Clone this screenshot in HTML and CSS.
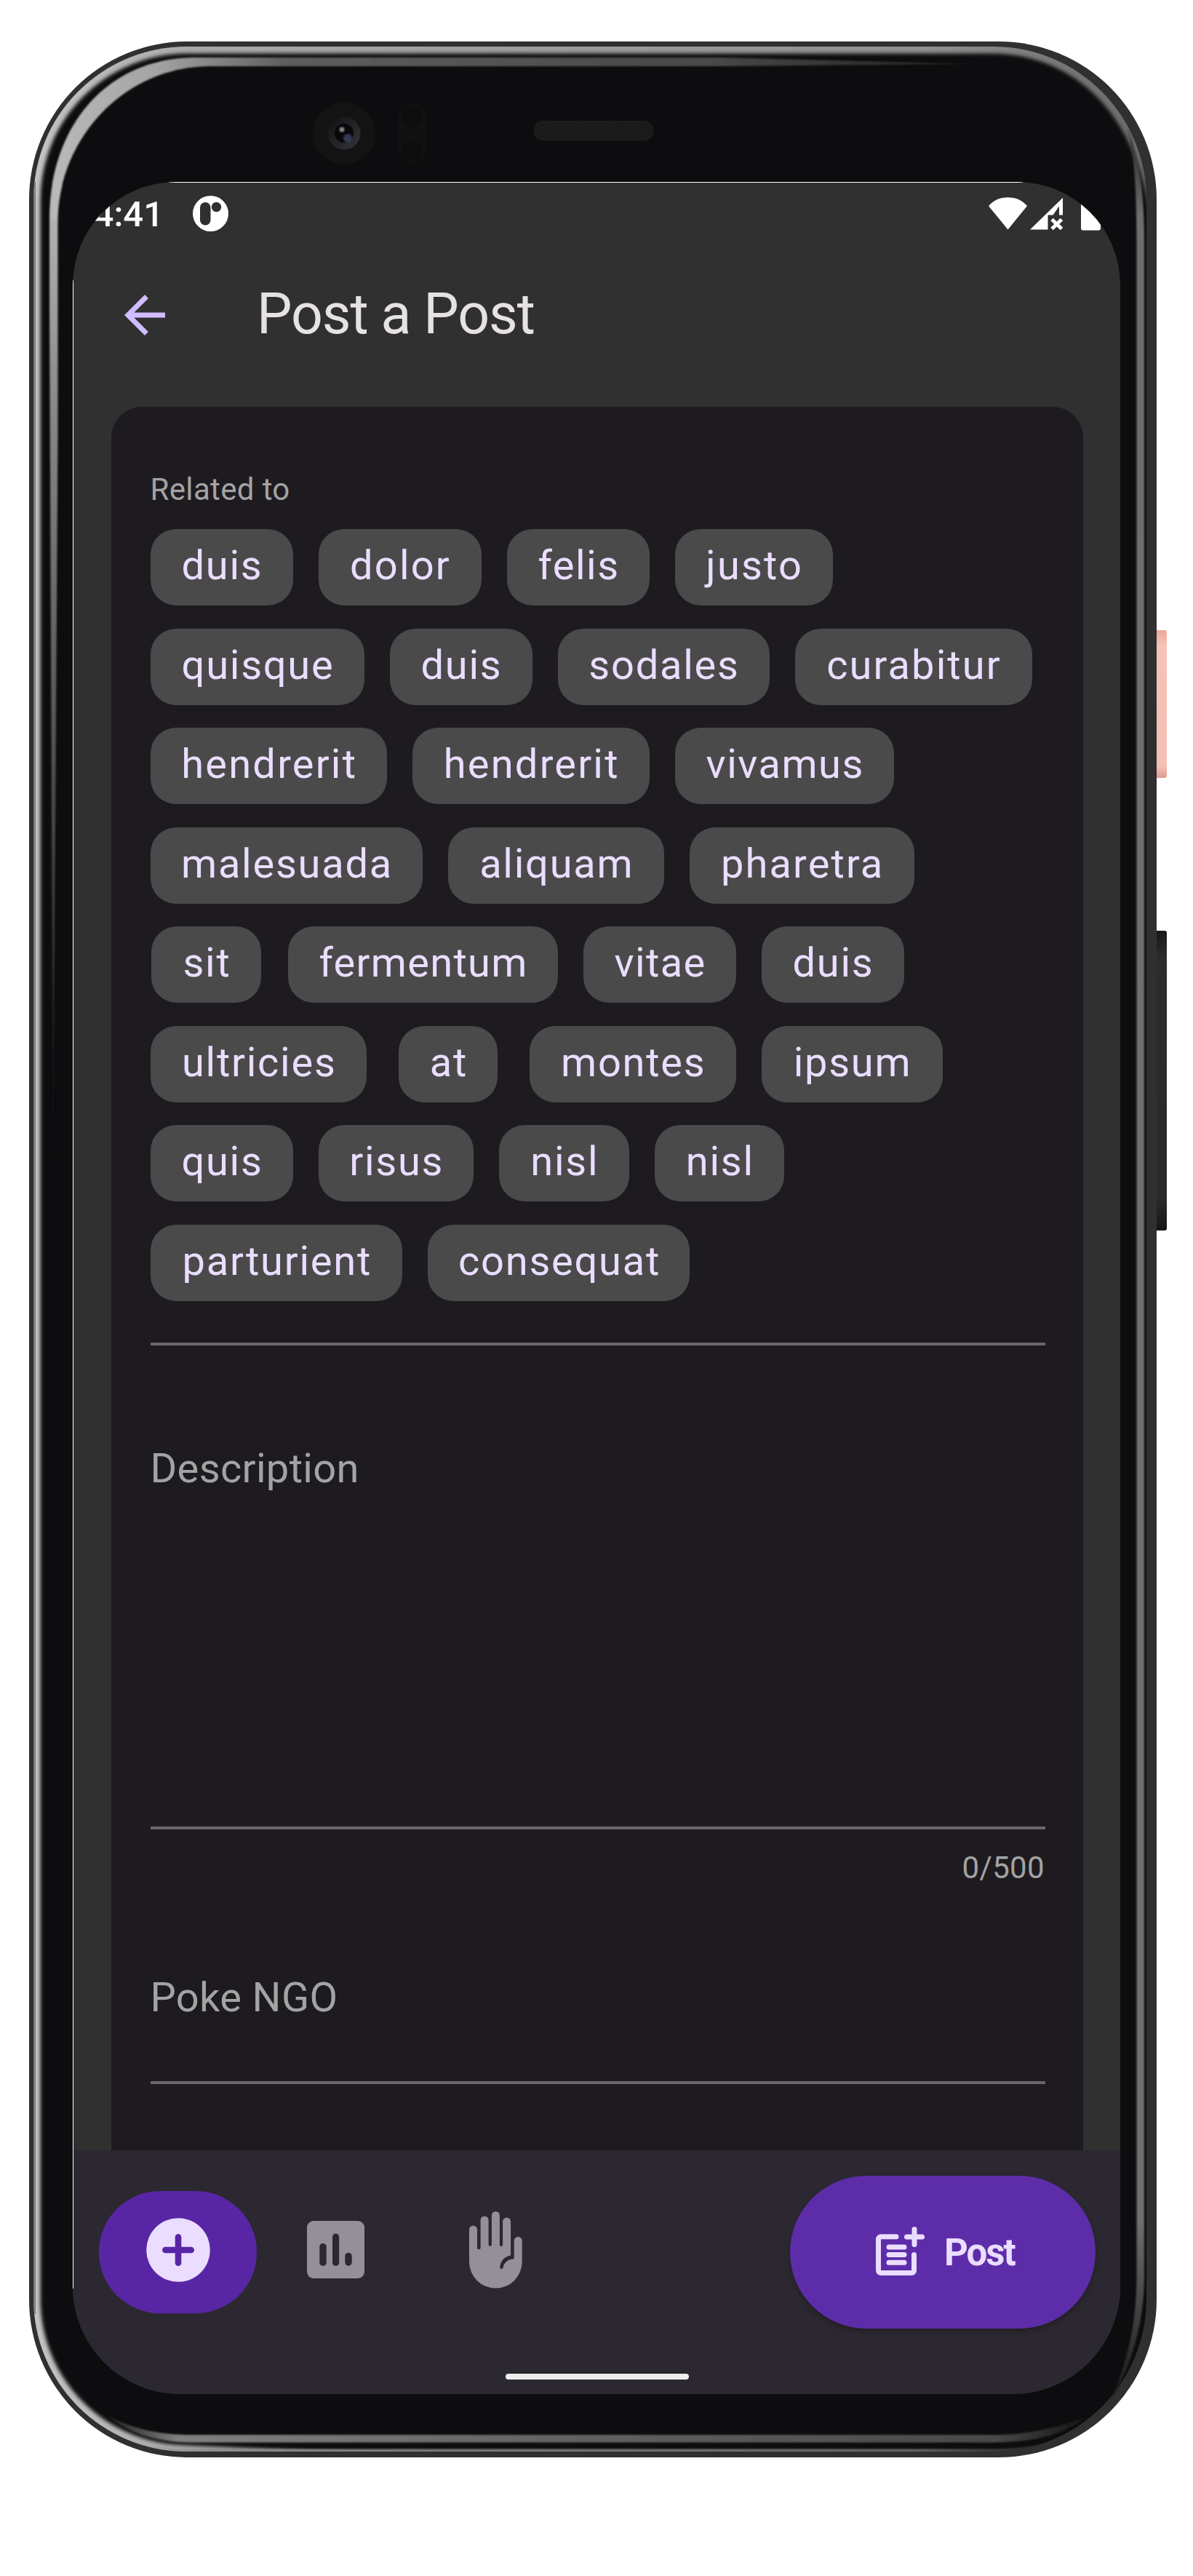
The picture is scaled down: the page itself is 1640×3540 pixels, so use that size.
FILE: index.html
```html
<!DOCTYPE html>
<html lang="en">
<head>
<meta charset="utf-8">
<title>Post a Post</title>
<link rel="stylesheet" href="styles.css">
</head>
<body>
<div class="device">
  <svg class="frame" width="1640" height="3540" viewBox="0 0 1640 3540" aria-hidden="true">
    <defs>
      <linearGradient id="metal" gradientUnits="userSpaceOnUse" x1="40" y1="0" x2="1590" y2="0">
        <stop offset="0" stop-color="#c4c4c4"/><stop offset=".15" stop-color="#a8a8a8"/><stop offset=".8" stop-color="#8f8f8f"/><stop offset="1" stop-color="#666"/>
      </linearGradient>
      <linearGradient id="lowMetal" gradientUnits="userSpaceOnUse" x1="180" y1="0" x2="1520" y2="0">
        <stop offset="0" stop-color="#8a8a8a" stop-opacity="0"/><stop offset=".08" stop-color="#8a8a8a"/><stop offset=".8" stop-color="#6a6a6a"/><stop offset="1" stop-color="#555" stop-opacity="0"/>
      </linearGradient>
      <linearGradient id="sheenTop" gradientUnits="userSpaceOnUse" x1="60" y1="0" x2="1340" y2="0">
        <stop offset="0" stop-color="#bbb"/><stop offset=".12" stop-color="#a4a4a4"/><stop offset=".26" stop-color="#5e5e5e"/><stop offset=".7" stop-color="#4a4a4a"/><stop offset="1" stop-color="#222"/>
      </linearGradient>
      <linearGradient id="sheenLeft" gradientUnits="userSpaceOnUse" x1="0" y1="300" x2="0" y2="1560">
        <stop offset="0" stop-color="#b2b2b2"/><stop offset=".2" stop-color="#8a8a8a"/><stop offset=".8" stop-color="#333"/><stop offset="1" stop-color="#0d0d0f"/>
      </linearGradient>
      <linearGradient id="sheenBottom" gradientUnits="userSpaceOnUse" x1="150" y1="0" x2="1500" y2="0">
        <stop offset="0" stop-color="#222"/><stop offset=".07" stop-color="#808080"/><stop offset=".5" stop-color="#606060"/><stop offset=".9" stop-color="#4a4a4a"/><stop offset="1" stop-color="#111"/>
      </linearGradient>
      <linearGradient id="sheenRight" gradientUnits="userSpaceOnUse" x1="0" y1="170" x2="0" y2="3300">
        <stop offset="0" stop-color="#222"/><stop offset=".04" stop-color="#6e6e6e"/><stop offset=".92" stop-color="#707072"/><stop offset="1" stop-color="#161616"/>
      </linearGradient>
      <linearGradient id="pink" x1="0" y1="0" x2="0" y2="1">
        <stop offset="0" stop-color="#eaa79a"/><stop offset=".1" stop-color="#f5c2b7"/><stop offset=".92" stop-color="#f5c0b5"/><stop offset="1" stop-color="#dc9a8e"/>
      </linearGradient>
      <linearGradient id="dark" x1="0" y1="0" x2="0" y2="1">
        <stop offset="0" stop-color="#171717"/><stop offset=".09" stop-color="#2c2c2c"/><stop offset=".9" stop-color="#292929"/><stop offset="1" stop-color="#161616"/>
      </linearGradient>
      <linearGradient id="lensRing" x1="0" y1="0" x2="1" y2="1">
        <stop offset="0" stop-color="#101011"/><stop offset="1" stop-color="#35363a"/>
      </linearGradient>
      <pattern id="mesh" width="4" height="4" patternUnits="userSpaceOnUse">
        <rect width="4" height="4" fill="#101010"/><rect width="2" height="2" fill="#252525"/><rect x="2" y="2" width="2" height="2" fill="#252525"/>
      </pattern>
      <clipPath id="body"><rect x="46" y="64" width="1530" height="3305" rx="210"/></clipPath>
      <filter id="soft" x="-5%" y="-5%" width="110%" height="110%"><feGaussianBlur stdDeviation="2.4"/></filter>
      <filter id="fine" x="-5%" y="-5%" width="110%" height="110%"><feGaussianBlur stdDeviation=".9"/></filter>
    </defs>
    <rect x="1584" y="866" width="20" height="203" rx="3" fill="url(#pink)"/>
    <rect x="1584" y="1279" width="20" height="412" rx="3" fill="url(#dark)"/>
    <rect x="40" y="57" width="1550" height="3320" rx="217" fill="#2f302f"/>
    <rect x="46" y="64" width="1530" height="3305" rx="210" fill="#0d0d0f"/>
    <g clip-path="url(#body)" fill="none">
      <path d="M1592 330C1580 158 1485 66 1362 66H258C141 66 48 160 48 276V3158C48 3275 141 3367 258 3368L520 3380" stroke="url(#metal)" stroke-width="15" filter="url(#soft)"/>
      <path d="M180 3355Q220 3368 258 3368H1366Q1450 3368 1520 3330" stroke="url(#lowMetal)" stroke-width="5" filter="url(#fine)"/>
      <path d="M47.500 250V3180" stroke="#7e7e7e" stroke-width="3"/>
    </g>
    <g filter="url(#fine)">
      <path d="M73 1600L68 420V300H79.500V600Z" fill="url(#sheenLeft)"/>
      <path d="M68 301C68 170 150 79 268 79H990L1340 88L990 91H290C170 91 82 190 79.500 301Z" fill="url(#sheenTop)"/>
      <path d="M1550 175C1562 210 1573 250 1573 330V3130C1573 3190 1555 3255 1526 3300C1548 3250 1562 3200 1562.500 3130V330C1562 260 1560 215 1550 175Z" fill="url(#sheenRight)"/>
      <path d="M145 3318C180 3338 220 3346 262 3346H1366C1410 3346 1450 3338 1496 3320C1460 3350 1410 3356 1366 3356.500H262C210 3356 175 3342 145 3318Z" fill="url(#sheenBottom)"/>
    </g>
    <circle cx="473" cy="183" r="43" fill="#131313"/>
    <circle cx="473" cy="183" r="22.500" fill="url(#lensRing)"/>
    <circle cx="473" cy="183" r="13" fill="#08080a"/>
    <circle cx="478" cy="190" r="6" fill="#343b57" filter="url(#fine)"/>
    <circle cx="470" cy="178" r="3.500" fill="#888" filter="url(#fine)"/>
    <rect x="548" y="143" width="37" height="82" rx="18.500" fill="#111"/>
    <circle cx="566.500" cy="161" r="14" fill="#0e0e0e"/>
    <circle cx="566.500" cy="207" r="14" fill="#0e0e0e"/>
    <rect x="734.500" y="166.500" width="163" height="26" rx="12" fill="url(#mesh)" stroke="#222"/>
  </svg>

  <div class="screen">
    <div class="status">
      <span class="time">4:41</span>
      <svg class="badge" width="49" height="49" viewBox="0 0 49 49"><circle cx="24.500" cy="24.500" r="24.500" fill="#fff"/><rect x="10" y="9" width="14.500" height="31.500" rx="7.200" fill="#303030"/><circle cx="32.500" cy="15.500" r="6.700" fill="#303030"/></svg>
      <svg class="signals" width="154" height="50" viewBox="0 0 154 50" fill="#fff">
        <path d="M0 14C7 6 16 2.300 26.500 2.300S46 6 53 14L26.500 46.500Z"/>
        <path d="M57 46.500L102 2.800V26.500H97V14.500L88.500 26.500H81.500V46.500Z"/>
        <path d="M87 32.500L100.500 45.500M100.500 32.500L87 45.500" stroke="#fff" stroke-width="5"/>
        <path d="M127 6H154V44.500a3 3 0 0 1-3 3H130a3 3 0 0 1-3-3Z"/>
      </svg>
    </div>

    <header class="appbar">
      <svg width="56" height="56" viewBox="4 4 16 16" fill="#d0bcff"><path d="M20 11H7.830l5.590-5.590L12 4l-8 8 8 8 1.410-1.410L7.830 13H20v-2z"/></svg>
      <h1>Post a Post</h1>
    </header>

    <main class="content">
      <section class="card">
        <div class="label small">Related to</div>
        <ul class="chips">
          <li><span style="--w:196px">duis</span></li>
          <li><span style="--w:224px;--t:2.2px">dolor</span></li>
          <li><span style="--w:196px;--t:1.5px">felis</span></li>
          <li><span style="--w:217.500px;--t:2.2px">justo</span></li>
          <li><span style="--w:294px">quisque</span></li>
          <li><span style="--w:196px">duis</span></li>
          <li><span style="--w:291px">sodales</span></li>
          <li><span style="--w:326px;--t:2.1px">curabitur</span></li>
          <li><span style="--w:325.500px;--t:2.2px">hendrerit</span></li>
          <li><span style="--w:325.500px;--t:2.2px">hendrerit</span></li>
          <li><span style="--w:301.500px;--t:1.5px">vivamus</span></li>
          <li><span style="--w:374px">malesuada</span></li>
          <li><span style="--w:297.500px">aliquam</span></li>
          <li><span style="--w:308.500px;--t:2.1px">pharetra</span></li>
          <li><span style="--w:151px">sit</span></li>
          <li><span style="--w:371px;--t:1.3px">fermentum</span></li>
          <li><span style="--w:210px;--t:1.400px">vitae</span></li>
          <li><span style="--w:196px">duis</span></li>
          <li><span style="--w:297.500px">ultricies</span></li>
          <li><span style="--w:136.500px">at</span></li>
          <li><span style="--w:283.500px">montes</span></li>
          <li><span style="--w:249px">ipsum</span></li>
          <li><span style="--w:196px">quis</span></li>
          <li><span style="--w:213.500px">risus</span></li>
          <li><span style="--w:178.500px">nisl</span></li>
          <li><span style="--w:178.500px">nisl</span></li>
          <li><span style="--w:346.500px">parturient</span></li>
          <li><span style="--w:360px">consequat</span></li>
        </ul>
        <div class="field description"><div class="label">Description</div></div>
        <div class="counter label small">0/500</div>
        <div class="field poke"><div class="label">Poke NGO</div></div>
      </section>
    </main>

    <nav class="bottombar">
      <div class="tab active">
        <svg width="88" height="88" viewBox="0 0 88 88"><circle cx="44" cy="44" r="43.800" fill="#eaddff"/><path d="M26.300 44H61.700M44 26.300V61.700" stroke="#5826a5" stroke-width="8.600" stroke-linecap="round"/></svg>
      </div>
      <svg class="chart" width="79" height="79" viewBox="0 0 79 79"><rect width="79" height="79" rx="9" fill="#948f99"/><g fill="#2c2831"><rect x="17.300" y="31" width="9.400" height="30.800" rx="4.600"/><rect x="35" y="17.500" width="9.200" height="44.300" rx="4.600"/><rect x="52.300" y="43.700" width="9.400" height="18" rx="4.600"/></g></svg>
      <svg class="hand" width="73" height="106" viewBox="0 0 73 106"><path fill="#948f99" d="M0 25a5.500 5.500 0 0 1 11 0V50a2.300 2.300 0 0 0 4.600 0V12a5.500 5.500 0 0 1 11 0V46a2.200 2.200 0 0 0 4.300 0V5.500a5.500 5.500 0 0 1 11 0V46a2.100 2.100 0 0 0 4.200 0V14a5.500 5.500 0 0 1 11 0V60.500C48 62 43.500 68 42.300 76a2.200 2.200 0 0 0 4.200 1.500C48 70 53 66 60 65.500a1.700 1.700 0 0 0 1.700-1.800V40.300a5.500 5.500 0 0 1 11 0V69.200a36.350 36.350 0 0 1-72.700 0Z"/></svg>
      <button class="post" type="button">
        <svg width="67" height="67" viewBox="0 0 67 67" fill="none" stroke="#eaddff" stroke-width="7" stroke-linecap="round"><path d="M28 13.800H7a3.500 3.500 0 0 0-3.500 3.500V60A3.500 3.500 0 0 0 7 63.500H49A3.500 3.500 0 0 0 52.500 60V38.600M18 28H39M18 38.600H39M18 49.200H39M42.500 14H63.500M53 3.500V24.500"/></svg>
        <span>Post</span>
      </button>
      <div class="pill"></div>
    </nav>
  </div>
</div>
</body>
</html>
```
FILE: styles.css
```css
* { box-sizing: border-box; }
body { margin: 0; background: #fff; font-family: Roboto, "Liberation Sans", sans-serif; }
svg { display: block; flex: none; }

.device { position: relative; width: 1640px; height: 3540px; padding: 250px 100px; overflow: hidden; }
.frame { position: absolute; left: 0; top: 0; }

.screen {
  position: relative;
  display: flex;
  flex-direction: column;
  width: 1440px;
  height: 3040px;
  border-radius: 142px 142px 148px 148px;
  overflow: hidden;
  background: #303030;
}
/* hairline where the panel meets the bezel */
.screen::before, .screen::after { content: ""; position: absolute; z-index: 2; background: #fff; }
.screen::before { left: 132px; right: 134px; top: 0; height: 1px; }
.screen::after { left: 0; top: 135px; bottom: 145px; width: 1px; }

.status { display: flex; align-items: center; height: 87px; padding-right: 27px; }
.time { width: 125px; margin-top: 3px; text-align: right; font-size: 49px; line-height: 56px; font-weight: 500; color: #fff; }
.badge { margin-left: 40px; }
.signals { margin-left: auto; }

.appbar { display: flex; align-items: center; gap: 126px; height: 192px; padding-left: 71px; }
.appbar h1 { margin: -3px 0 0; font-size: 77px; line-height: 96px; font-weight: 400; letter-spacing: -1.1px; color: #e6e1e5; }

.content { flex: 1; min-height: 0; overflow: hidden; padding: 30px 51.500px 0 53px; }
.card { height: 2600px; padding: 93px 51.500px 0 53.500px; border-radius: 42px; background: #1e1b20; }
.label { font-size: 56px; line-height: 56px; letter-spacing: .35px; color: #a3a3a3; }
.small { font-size: 42px; line-height: 42px; }

.chips { display: flex; flex-wrap: wrap; gap: 31.500px 35px; margin: 33px 0 0; padding: 0; list-style: none; }
.chips li { display: flex; justify-content: center; min-width: 154px; }
.chips span {
  width: var(--w);
  height: 105px;
  padding-left: 2px;
  border-radius: 35px;
  background: #4a4a4a;
  color: #eaddff;
  font-size: 56px;
  line-height: 101px;
  letter-spacing: var(--t, 1.750px);
  text-align: center;
  white-space: nowrap;
}

.field { border-bottom: 4px solid #69676b; }
.chips + .field { margin-top: 57.500px; padding-top: 141px; border-top: 4px solid #69676b; }
.description { height: 669px; }
.counter { margin-top: 32px; text-align: right; padding-right: 1px; }
.poke { margin-top: 129px; height: 147px; }

.bottombar { position: relative; display: flex; align-items: flex-start; height: 335px; padding: 35px 34px 0 36px; background: #2c2831; }
.tab { display: flex; align-items: center; justify-content: center; width: 217px; height: 168px; margin-top: 21px; padding-bottom: 7px; border-radius: 84px; background: #5826a5; }
.chart { margin: 62px 0 0 69px; }
.hand { margin: 49px 0 0 144px; }
.post {
  display: flex;
  align-items: center;
  width: 420px;
  height: 210px;
  margin-left: auto;
  padding: 0 0 3px 118px;
  gap: 27px;
  border: 0;
  border-radius: 105px;
  background: #5d2da9;
  box-shadow: 0 4px 7px rgba(0, 0, 0, .25);
  color: #eaddff;
  font: 700 51px/56px Roboto, sans-serif;
  letter-spacing: -2px;
}
.post span { margin-top: 5px; }
.pill { position: absolute; left: 595px; bottom: 20px; width: 252px; height: 8px; border-radius: 4px; background: #eee; }
```
